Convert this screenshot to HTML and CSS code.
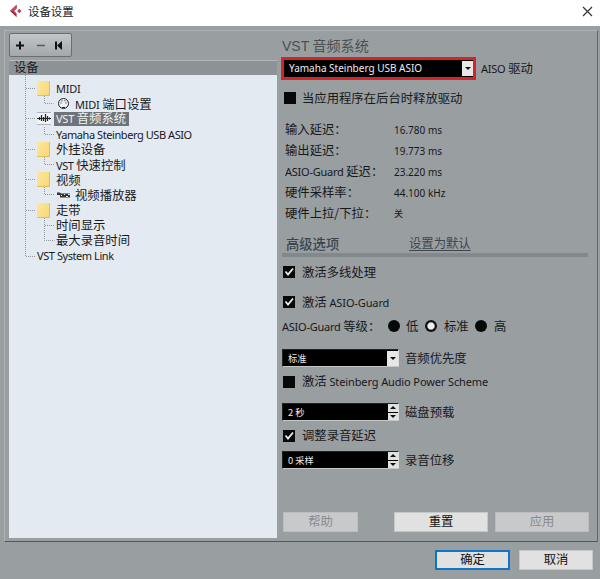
FILE: index.html
```html
<!DOCTYPE html>
<html lang="zh-CN">
<head>
<meta charset="utf-8">
<title>设备设置</title>
<link rel="stylesheet" href="styles.css">
</head>
<body>
<header class="titlebar">
  <svg class="logo" width="13" height="14" viewBox="0 0 13 14"><path d="M7.6.7 1 7l6.6 6.3V9.5L5 7l2.6-2.5z" fill="#a52e48"/><path d="M7.6.7 1 7h4l2.600-2.500z" fill="#c04b63"/><path d="m10.300 4.700 2.200 2.300-2.200 2.300L8.100 7z" fill="#b8425a"/></svg>
  <h1>设备设置</h1>
  <svg class="close" width="11" height="11" viewBox="0 0 11 11"><path d="m1 1 9 9M10 1l-9 9" stroke="#333" stroke-width="1.200"/></svg>
</header>
<main class="panel">
  <section class="left">
    <div class="toolbar">
      <svg width="62" height="22" viewBox="0 0 62 22"><path d="M6 11.500h8M10 7.500v8" stroke="#111" stroke-width="2"/><path d="M27 11.500h8" stroke="#555a5d" stroke-width="1.500"/><path d="M46 7.500v8" stroke="#111" stroke-width="2"/><path d="M52 7v9l-5-4.500z" fill="#111"/></svg>
    </div>
    <h2 class="list-head">设备</h2>
    <div class="tree">
      <svg class="lines" width="60" height="190" viewBox="0 0 60 190"><path d="M16.500 0v181.500M17 13.500h9M17 43.500h9M17 74.500h9M17 104.500h9M17 135.500h9M17 181.500h9M35.500 21v7.500h9M35.500 52v7.500h10M35.500 82v7.500h10M35.500 112v7.500h10M35.500 143v22.500h10M36 150.500h9" fill="none" stroke="#8f969c" stroke-dasharray="1 1"/></svg>
      <div class="node branch"><i class="folder"></i><span class="en">MIDI</span></div>
      <div class="node sub"><svg width="13" height="13" viewBox="0 0 13 13"><circle cx="6.500" cy="6.500" r="5" fill="#eef2f5" stroke="#222"/><path d="M3.500 6h1M4.500 3.800h1M7.500 3.800h1M8.500 6h1M5 10.500h3" stroke="#222"/></svg><span class="port"><span class="en">MIDI</span> 端口设置</span></div>
      <div class="node branch"><svg class="wave" width="14" height="13" viewBox="0 0 14 13"><path d="M0 .5h14M0 12.500h14" stroke="#aeb6bc"/><path d="M0 6.500h14M2.500 5v3M4.500 3v6M6.500 5v4M8.500 2v8M10.500 4v5M12.500 5.500v2" stroke="#222" stroke-width="1.200"/></svg><span class="selected"><span class="en">VST</span> 音频系统</span></div>
      <div class="node leaf"><span class="en tight">Yamaha Steinberg USB ASIO</span></div>
      <div class="node branch"><i class="folder"></i><span>外挂设备</span></div>
      <div class="node leaf"><span><span class="en tight">VST</span> 快速控制</span></div>
      <div class="node branch"><i class="folder"></i><span>视频</span></div>
      <div class="node sub"><svg width="14" height="8" viewBox="0 0 14 8"><path d="M0 1.500h3l1 1h9v4H3V4H0z" fill="#333"/><path d="M4 4.500h1M7 3.500h1M9 5.500h2M11 3.500h2" stroke="#dde5ed"/></svg><span class="port player">视频播放器</span></div>
      <div class="node branch"><i class="folder"></i><span>走带</span></div>
      <div class="node leaf">时间显示</div>
      <div class="node leaf">最大录音时间</div>
      <div class="node root"><span class="en tight">VST System Link</span></div>
    </div>
  </section>
  <section class="right">
    <h2 class="heading"><span>VST</span> 音频系统</h2>
    <div class="row driver"><div class="combo highlighted"><span class="value">Yamaha Steinberg USB ASIO</span><i class="arrow"></i></div><span class="label"><span class="en">AISO</span> 驱动</span></div>
    <div class="row release"><i class="box"></i><span>当应用程序在后台时释放驱动</span></div>
    <dl class="stats">
      <dt>输入延迟：</dt><dd>16.780 ms</dd>
      <dt>输出延迟：</dt><dd>19.773 ms</dd>
      <dt><span class="en">ASIO-Guard</span> 延迟：</dt><dd>23.220 ms</dd>
      <dt>硬件采样率：</dt><dd>44.100 kHz</dd>
      <dt>硬件上拉/下拉：</dt><dd class="off">关</dd>
    </dl>
    <div class="advanced"><h3>高级选项</h3><a>设置为默认</a></div>
    <div class="row multi"><i class="box"><svg width="12" height="12" viewBox="0 0 12 12"><path d="m2.500 5.500 2.500 3 5-6" fill="none" stroke="#eee" stroke-width="1.800"/></svg></i><span>激活多线处理</span></div>
    <div class="row guard"><i class="box"><svg width="12" height="12" viewBox="0 0 12 12"><path d="m2.500 5.500 2.500 3 5-6" fill="none" stroke="#eee" stroke-width="1.800"/></svg></i><span>激活 <span class="en wide">ASIO-Guard</span></span></div>
    <div class="row level"><span class="level-name"><span class="en">ASIO-Guard</span> 等级：</span><i class="radio"></i><span class="low">低</span><i class="radio on"></i><span class="std">标准</span><i class="radio"></i><span class="high">高</span></div>
    <div class="row priority"><div class="combo"><span class="value cjk">标准</span><i class="arrow"></i></div><span class="label">音频优先度</span></div>
    <div class="row power"><i class="box"></i><span>激活 <span class="en wide">Steinberg Audio Power Scheme</span></span></div>
    <div class="row preload"><div class="combo"><span class="value cjk">2 秒</span><i class="spin"><b></b><b></b></i></div><span class="label">磁盘预载</span></div>
    <div class="row adjust"><i class="box"><svg width="12" height="12" viewBox="0 0 12 12"><path d="m2.500 5.500 2.500 3 5-6" fill="none" stroke="#eee" stroke-width="1.800"/></svg></i><span>调整录音延迟</span></div>
    <div class="row shift"><div class="combo"><span class="value cjk">0 采样</span><i class="spin"><b></b><b></b></i></div><span class="label">录音位移</span></div>
    <div class="actions"><button disabled>帮助</button><button>重置</button><button disabled>应用</button></div>
  </section>
</main>
<footer class="footer"><button class="ok">确定</button><button>取消</button></footer>
</body>
</html>
```
FILE: styles.css
```css
* { box-sizing: border-box; }
body {
  margin: 0;
  width: 600px;
  height: 579px;
  overflow: hidden;
  display: flex;
  flex-direction: column;
  background: #999ea1;
  color: #17191b;
  font: 12.35px/15px "Noto Sans CJK SC", sans-serif;
  white-space: nowrap;
}
h1, h2, h3, dl, dd { margin: 0; font-weight: 400; }
svg { display: block; flex: none; }
i { font-style: normal; flex: none; }
.en { font-family: "Noto Sans", sans-serif; font-size: 11px; line-height: 1; letter-spacing: -.25px; }
.en.tight { letter-spacing: -.43px; }
.en.wide { letter-spacing: -.12px; }

.titlebar { height: 26px; background: #fff; display: flex; align-items: center; padding: 0 7px 4px 9px; }
.titlebar h1 { font-size: 11.4px; margin-left: 6px; }
.close { margin-left: auto; }

.panel {
  margin: 4px 2px 0 4px;
  height: 512px;
  border: 1px solid #aeb2b4;
  border-right-color: #64696d;
  border-bottom-color: #53595f;
  display: flex;
}
.left { width: 268px; margin: 2px 0 0 4px; display: flex; flex-direction: column; }
.toolbar {
  width: 63px;
  height: 24px;
  border: 1px solid #696e71;
  border-radius: 2px;
  background: linear-gradient(#c2c6c8, #a4a8ab);
}
.list-head {
  height: 15px;
  margin-top: 3px;
  padding-left: 5px;
  border-top: 1px solid #b4b8ba;
  background: #8d9296;
  font-size: 12.35px;
  line-height: 13px;
}
.tree { position: relative; height: 463px; padding-top: 6px; background: #e4eaf2; }
.lines { position: absolute; left: 0; top: 0; }
.node { position: relative; height: 15.2px; display: flex; align-items: center; line-height: 14px; }
.branch { padding-left: 28px; }
.branch > .folder + span { margin-left: 6px; }
.leaf { padding-left: 47px; }
.root { padding-left: 28px; }
.sub { padding-left: 48px; }
.port { margin-left: 5px; }
.port.player { margin-left: 4px; }
.folder {
  width: 13px;
  height: 15px;
  border-radius: 1px;
  background: linear-gradient(115deg, #ffe79b, #f6d677);
  box-shadow: inset -1px -1px #e5bd58;
}
.wave { background: #f1f4f7; }
.branch > .selected { margin-left: 3px; padding: 0 3px 0 2px; height: 14px; line-height: 13px; background: #6e7478; color: #f1f3f4; }

.right { width: 312px; margin-left: 5px; padding-top: 3px; }
.heading { height: 23px; font-size: 14.1px; line-height: 23px; color: #4b4f53; }
.heading span { font-family: "Liberation Sans", sans-serif; font-size: 14px; }
.row { display: flex; align-items: center; height: 19px; }
.combo {
  width: 117px;
  height: 18px;
  border: 1px solid #222;
  border-right-color: #ddd;
  border-bottom-color: #c4c8ca;
  background: #000;
  color: #ececec;
  display: flex;
  justify-content: space-between;
  align-items: center;
  flex: none;
}
.combo.highlighted { width: 195px; height: 23px; margin-left: -1px; border: 3px solid #d4232b; }
.value { font: 10px/15px "Noto Sans", sans-serif; padding-left: 5px; }
.value.cjk { font: 9.3px/15px "Noto Sans CJK SC", sans-serif; }
.arrow { width: 11px; height: 15px; background: #e7e7e7; display: grid; place-items: center; }
.arrow::after { content: ""; border: 3px solid transparent; border-top: 3px solid #111; border-bottom: 0; }
.spin { width: 10px; height: 16px; display: grid; gap: 1px; }
.spin b { background: #e2e2e2; display: grid; place-items: center; }
.spin b::after { content: ""; border: 3px solid transparent; border-bottom: 3px solid #111; border-top: 0; }
.spin b + b::after { border-top: 3px solid #111; border-bottom: 0; }
.label { margin-left: 6px; }
.driver { height: 23px; }
.driver .label { margin-left: 5px; }
.box { width: 12px; height: 12px; margin: 0 7px 0 1px; background: #080808; }
.release { height: 20px; margin-top: 8px; }
.release .box { margin-left: 2px; margin-right: 6px; }
.stats { margin: 11px 0 0 3px; display: grid; grid-template-columns: 109px 1fr; grid-auto-rows: 21px; line-height: 21px; }
.stats dd { font: 10px/22px "Noto Sans", sans-serif; }
.stats .off { font: 9px/22px "Noto Sans CJK SC", sans-serif; }
.advanced { height: 23px; margin: 10px 6px 0 0; padding-left: 4px; border-bottom: 4px solid #83888b; display: flex; line-height: 19px; color: #3c4650; }
.advanced h3 { width: 123px; font-size: 13.3px; font-weight: 500; }
.advanced a { text-decoration: underline; text-underline-offset: 2px; }
.multi { height: 20px; margin-top: 5px; }
.guard { height: 20px; margin-top: 10px; }
.level { height: 20px; margin-top: 4px; }
.level-name { width: 106px; }
.radio { width: 12px; height: 12px; border-radius: 50%; background: #080808; }
.radio.on { background: radial-gradient(circle, #eee 0 3px, #111 4.3px); }
.low { width: 19px; margin-left: 6px; }
.std { width: 31px; margin-left: 7px; }
.high { margin-left: 7px; }
.priority { height: 18px; margin-top: 13px; }
.power { margin-top: 5px; }
.preload { height: 18px; margin-top: 12px; }
.adjust { margin-top: 5px; }
.shift { height: 18px; margin-top: 6px; }
button {
  padding: 0 0 1px;
  border: 1px solid #c5c8ca;
  background: #e1e1e1;
  color: #111;
  font: 12.35px/15px "Noto Sans CJK SC", sans-serif;
}
button:disabled { background: #c8c9ca; border-color: #bbbdbf; color: #898c8e; }
.actions { display: flex; height: 20px; margin: 43px 5px 0 1px; }
.actions button { width: 94px; }
.actions button:first-child { width: 75px; margin-right: auto; }
.actions button:last-child { margin-left: 7px; }
.footer { display: flex; gap: 9px; margin: 8px 0 0 435px; height: 20px; }
.footer button { width: 74px; }
.footer .ok { width: 75px; border: 2px solid #0d75cc; }
```
